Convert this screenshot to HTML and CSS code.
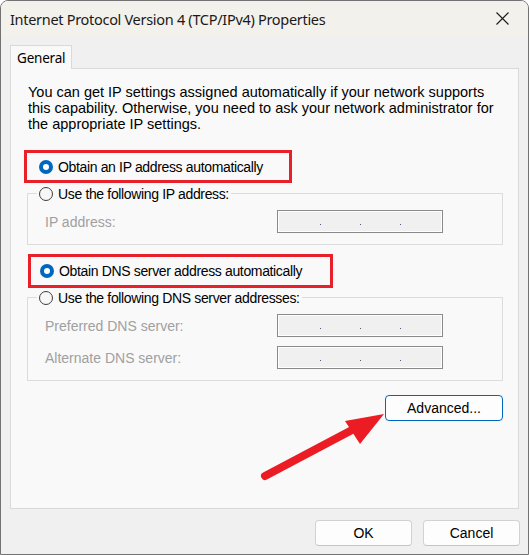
FILE: index.html
```html
<!DOCTYPE html>
<html>
<head>
<meta charset="utf-8">
<link rel="stylesheet" href="styles.css">
</head>
<body>
<div class="window">
  <div class="titlebar">
    <span class="title">Internet Protocol Version 4 (TCP/IPv4) Properties</span>
    <svg class="close" width="13" height="13" viewBox="0 0 13 13"><path d="M0.5 0.5L12.5 12.5M12.5 0.5L0.5 12.5" stroke="#1b1b1b" stroke-width="1.1" fill="none"/></svg>
  </div>
  <div class="content">
    <div class="tabs"><div class="tab">General</div></div>
    <div class="panel">
      <p class="desc">You can get IP settings assigned automatically if your network supports this capability. Otherwise, you need to ask your network administrator for the appropriate IP settings.</p>

      <div class="mark mark-ip">
        <div class="opt"><span class="radio on"></span><span>Obtain an IP address automatically</span></div>
      </div>

      <div class="group group-ip">
        <div class="opt head"><span class="radio"></span><span>Use the following IP address:</span></div>
        <div class="field first">
          <span class="flabel">IP address:</span>
          <div class="ipbox"><i></i><i></i><i></i></div>
        </div>
      </div>

      <div class="mark mark-dns">
        <div class="opt"><span class="radio on"></span><span>Obtain DNS server address automatically</span></div>
      </div>

      <div class="group group-dns">
        <div class="opt head"><span class="radio"></span><span>Use the following DNS server addresses:</span></div>
        <div class="field first">
          <span class="flabel">Preferred DNS server:</span>
          <div class="ipbox"><i></i><i></i><i></i></div>
        </div>
        <div class="field second">
          <span class="flabel">Alternate DNS server:</span>
          <div class="ipbox"><i></i><i></i><i></i></div>
        </div>
      </div>

      <div class="adv-row"><button class="btn adv">Advanced...</button></div>
    </div>
    <div class="actions">
      <button class="btn">OK</button>
      <button class="btn">Cancel</button>
    </div>
  </div>
  <svg class="arrow" width="529" height="555" viewBox="0 0 529 555">
    <line x1="265" y1="476" x2="352" y2="430" stroke="#ec1c24" stroke-width="8" stroke-linecap="round"/>
    <polygon points="384,414 345,421 360,444" fill="#ec1c24"/>
  </svg>
</div>
</body>
</html>
```
FILE: styles.css
```css
* { box-sizing: border-box; }
html, body { margin: 0; padding: 0; background: #ffffff; }
body { font-family: "Liberation Sans", Arial, sans-serif; font-size: 14px; letter-spacing: -0.35px; color: #000; }

.window {
  position: relative;
  width: 529px;
  height: 555px;
  border: 1px solid #727272;
  border-radius: 8px 8px 0 0;
  background: #f0f0f0;
  overflow: hidden;
}

.titlebar {
  height: 36px;
  background: #f3f1ec;
  display: flex;
  align-items: center;
  justify-content: space-between;
  padding: 0 19px 0 9px;
}
.title {
  font-family: "Noto Sans", "Liberation Sans", sans-serif;
  font-size: 14.5px;
  letter-spacing: -0.3px;
  color: #1a1a1a;
  margin-top: -1px;
}
.close { display: block; margin-top: -1px; }

.content { padding: 8px 8px 0 9px; }

.tabs { display: flex; }
.tab {
  position: relative;
  z-index: 1;
  width: 62px;
  height: 24px;
  margin-bottom: -1px;
  padding: 4px 0 0 6px;
  background: #f9f9f9;
  border: 1px solid #d9d9d9;
  border-bottom: none;
  font-family: "Noto Sans", "Liberation Sans", sans-serif;
  font-size: 13.5px;
  letter-spacing: -0.2px;
  line-height: 16px;
}

.panel {
  width: 509px;
  height: 441px;
  background: #f9f9f9;
  border: 1px solid #d9d9d9;
  padding: 15px 15px 0 16px;
}

.desc {
  margin: 0 0 0 1px;
  line-height: 16px;
  font-size: 14.5px;
  letter-spacing: 0;
}

.opt {
  display: flex;
  align-items: center;
  gap: 5px;
  height: 16px;
  line-height: 16px;
  white-space: nowrap;
}
.radio {
  flex: none;
  width: 14px;
  height: 14px;
  border-radius: 50%;
  border: 1px solid #3d3d3d;
  background: #f7f7f7;
}
.radio.on {
  border: 4px solid #0067c0;
  background: #ffffff;
}

.mark {
  border: 3px solid #e8202a;
}
.mark-ip {
  margin: 18px 0 0 -3px;
  width: 268px;
  padding: 6px 0 5px 12px;
}
.mark-dns {
  margin: 9px 0 0 1px;
  width: 305px;
  padding: 6px 0 6px 9px;
}

.group {
  width: 476px;
  border: 1px solid #dcdcdc;
  padding: 0 0 11px 17px;
}
.group-ip { margin-top: 10px; }
.group-dns { margin-top: 9px; }
.group .head {
  width: max-content;
  margin: -8px 0 0 9px;
  padding: 0 2px;
  background: #f9f9f9;
  position: relative;
  left: -17px;
}

.field {
  display: grid;
  grid-template-columns: 232px 166px;
  align-items: center;
  height: 23px;
  color: #a0a0a0;
}
.flabel { letter-spacing: 0; }
.field.first { margin-top: 8px; }
.field.second { margin-top: 9px; }

.ipbox {
  height: 23px;
  border: 1px solid #8a8a8a;
  box-shadow: inset 0 0 0 1px #ffffff;
  background: #f0f0f0;
  display: flex;
  align-items: flex-end;
  padding: 0 0 7px 42px;
  gap: 39px;
}
.ipbox i {
  display: block;
  width: 1px;
  height: 1px;
  background: #55557a;
}

.adv-row {
  display: flex;
  justify-content: flex-end;
  margin-top: 14px;
  width: 476px;
}

.btn {
  font-family: "Liberation Sans", Arial, sans-serif;
  font-size: 14px;
  letter-spacing: 0;
  color: #000;
  height: 26px;
  width: 97px;
  background: #fdfdfd;
  border: 1px solid #d2d2d2;
  border-bottom-color: #c4c4c4;
  border-radius: 4px;
  padding: 0;
}
.btn.adv {
  width: 118px;
  border: 1px solid #0067c0;
  background: #fdfdfd;
}

.actions {
  display: flex;
  justify-content: flex-end;
  gap: 11px;
  margin-top: 11px;
}

.arrow {
  position: absolute;
  top: -1px;
  left: -1px;
  pointer-events: none;
}
```
